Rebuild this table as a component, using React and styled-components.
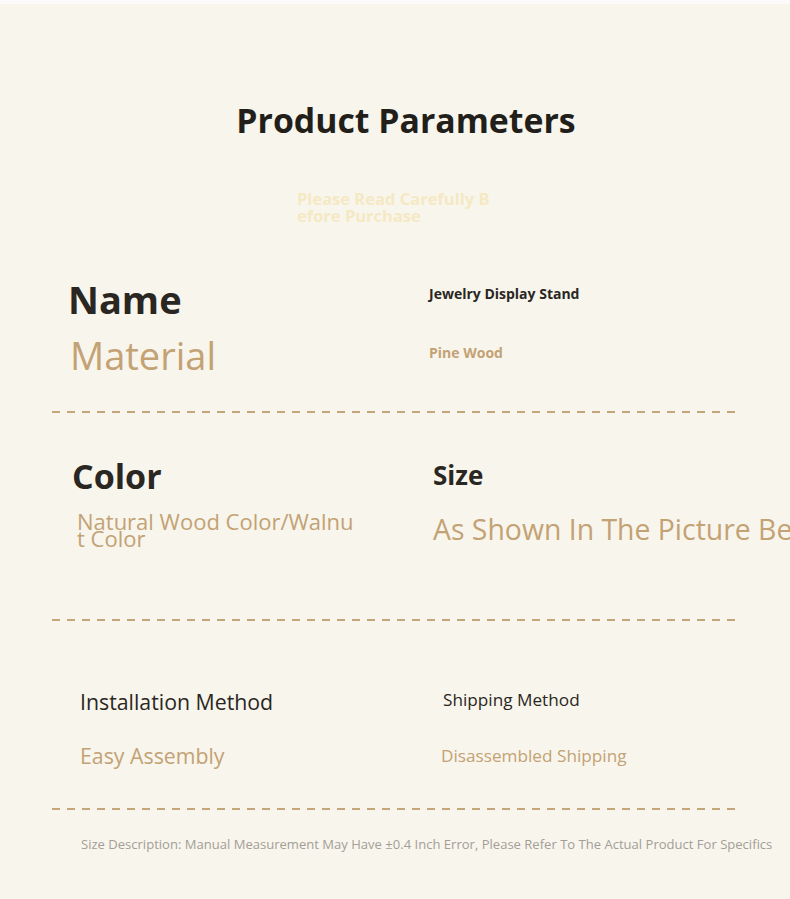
import styled, { createGlobalStyle } from 'styled-components'

const GlobalStyle = createGlobalStyle`
  html, body {
    margin: 0;
    padding: 0;
    background: #f8f5ed;
    overflow-x: hidden;
  }
  body {
    font-family: 'Open Sans', 'Noto Sans', Arial, sans-serif;
  }
`

const DARK = '#2a2722'
const TAN = '#c3a274'

const Page = styled.div`
  width: 790px;
  min-height: 899px;
  background: #f8f5ed;
  border-top: 4px solid #fcfafa;
  box-sizing: border-box;
  overflow: hidden;
`

const Header = styled.header`
  display: flex;
  flex-direction: column;
  align-items: center;
  padding-top: 96px;
  height: 246px;
  box-sizing: border-box;
`

const Title = styled.h1`
  margin: 0;
  padding-left: 22px;
  font-size: 33.8px;
  line-height: 40px;
  font-weight: 700;
  color: #221f1a;
`

const Subtitle = styled.p`
  margin: 50px 0 0;
  padding-left: 4px;
  width: 200px;
  font-size: 16.5px;
  line-height: 17px;
  font-weight: 700;
  color: #f5e9c3;
  word-break: break-all;
`

const Section = styled.section`
  display: grid;
  grid-template-columns: 360px 1fr;
  height: ${(p) => p.$height}px;
  padding-left: ${(p) => p.$indent}px;
  box-sizing: border-box;
`

const Cell = styled.div`
  display: flex;
  flex-direction: column;
  align-items: flex-start;
  padding-top: ${(p) => p.$top}px;
  min-width: 0;
`

const Key = styled.div`
  font-size: ${(p) => p.$size}px;
  line-height: ${(p) => p.$lh}px;
  font-weight: ${(p) => (p.$bold ? 700 : 400)};
  color: ${DARK};
  margin-left: ${(p) => p.$shift || 0}px;
  white-space: nowrap;
`

const Value = styled.div`
  font-size: ${(p) => p.$size}px;
  line-height: ${(p) => p.$lh}px;
  font-weight: ${(p) => (p.$bold ? 700 : 400)};
  color: ${TAN};
  margin-top: ${(p) => p.$gap}px;
  white-space: ${(p) => (p.$wrap ? 'normal' : 'nowrap')};
  width: ${(p) => (p.$wrap ? `${p.$wrap}px` : 'auto')};
  word-break: ${(p) => (p.$wrap ? 'break-all' : 'normal')};
  margin-left: ${(p) => p.$shift || 0}px;
`

const Divider = styled.div`
  margin-left: 52px;
  width: 688px;
  height: 2px;
  background: repeating-linear-gradient(
    to right,
    #c5a67b 0,
    #c5a67b 8px,
    transparent 8px,
    transparent 15px
  );
`

const Note = styled.p`
  margin: 0;
  padding: 25px 0 0 81px;
  font-size: 13.05px;
  line-height: 18px;
  color: #a39e96;
  white-space: nowrap;
`

export default function App() {
  return (
    <Page>
      <GlobalStyle />
      <Header>
        <Title>Product Parameters</Title>
        <Subtitle>Please Read Carefully Before Purchase</Subtitle>
      </Header>

      <Section $height={161} $indent={68}>
        <Cell $top={26}>
          <Key $size={38} $lh={46} $bold>
            Name
          </Key>
          <Value $size={38} $lh={46} $gap={10} $shift={2}>
            Material
          </Value>
        </Cell>
        <Cell $top={34}>
          <Key $size={14} $lh={20} $bold $shift={1}>
            Jewelry Display Stand
          </Key>
          <Value $size={14} $lh={20} $gap={39} $bold $shift={1}>
            Pine Wood
          </Value>
        </Cell>
      </Section>
      <Divider />

      <Section $height={206} $indent={72}>
        <Cell $top={42}>
          <Key $size={34} $lh={42} $bold>
            Color
          </Key>
          <Value $size={22} $lh={17} $gap={16} $wrap={280} $shift={5}>
            Natural Wood Color/Walnut Color
          </Value>
        </Cell>
        <Cell $top={46}>
          <Key $size={26} $lh={32} $bold $shift={1}>
            Size
          </Key>
          <Value $size={28.4} $lh={36} $gap={20} $shift={1}>
            As Shown In The Picture Below
          </Value>
        </Cell>
      </Section>
      <Divider />

      <Section $height={187} $indent={80}>
        <Cell $top={67}>
          <Key $size={21.3} $lh={28}>
            Installation Method
          </Key>
          <Value $size={21.3} $lh={28} $gap={26}>
            Easy Assembly
          </Value>
        </Cell>
        <Cell $top={67}>
          <Key $size={17.2} $lh={24} $shift={3}>
            Shipping Method
          </Key>
          <Value $size={17.2} $lh={24} $gap={32} $shift={1}>
            Disassembled Shipping
          </Value>
        </Cell>
      </Section>
      <Divider />

      <Note>
        Size Description: Manual Measurement May Have ±0.4 Inch Error, Please
        Refer To The Actual Product For Specifics
      </Note>
    </Page>
  )
}
